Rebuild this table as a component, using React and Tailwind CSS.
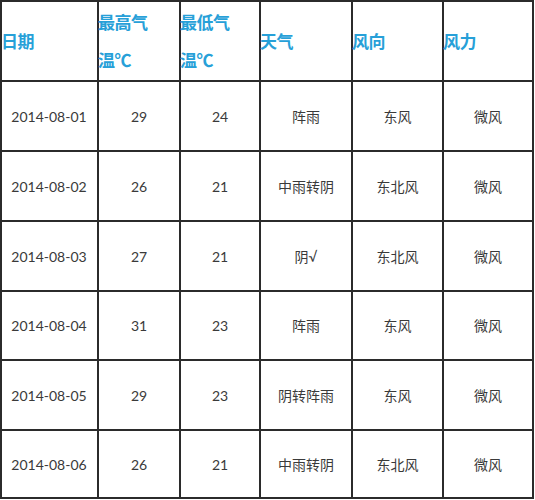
import React from 'react';

const rows = [
  ['2014-08-01', '29', '24', '阵雨', '东风', '微风'],
  ['2014-08-02', '26', '21', '中雨转阴', '东北风', '微风'],
  ['2014-08-03', '27', '21', '阴√', '东北风', '微风'],
  ['2014-08-04', '31', '23', '阵雨', '东风', '微风'],
  ['2014-08-05', '29', '23', '阴转阵雨', '东风', '微风'],
  ['2014-08-06', '26', '21', '中雨转阴', '东北风', '微风'],
];

const heights = ['h-[70px]', 'h-[70px]', 'h-[70px]', 'h-[69px]', 'h-[70px]', 'h-[68px]'];

const headers = [['日期'], ['最高气', '温℃'], ['最低气', '温℃'], ['天气'], ['风向'], ['风力']];

const cell = 'border-r-2 border-b-2 border-[#2b2b2b] flex items-center';

const App = () => {
  return (
    <div className='w-[535px] h-[500px] bg-white overflow-hidden'>
      <div
        className='grid grid-cols-[97px_82px_80px_92px_91px_90px] w-[534px] border-l-2 border-t-2 border-[#2b2b2b]'
        style={{ fontFamily: '"Noto Sans CJK SC", sans-serif' }}
      >
        {headers.map((h, i) => (
          <div key={i} className={`${cell} h-[80px]`}>
            <div className='-ml-[1px] text-[17px] font-bold leading-[38px] text-[#27a0d8] tracking-[-0.5px]'>
              {h.map((line, j) => (
                <div key={j}>{line}</div>
              ))}
            </div>
          </div>
        ))}
        {rows.map((row, r) =>
          row.map((val, c) => (
            <div
              key={`${r}-${c}`}
              className={`${cell} ${heights[r]} justify-center text-[14px] text-[#3a3a3a] ${c === 0 ? 'pr-[1px]' : ''}`}
              style={{ fontFamily: 'Lato, "Noto Sans CJK SC", sans-serif' }}
            >
              {val}
            </div>
          ))
        )}
      </div>
    </div>
  );
};

export default App;
